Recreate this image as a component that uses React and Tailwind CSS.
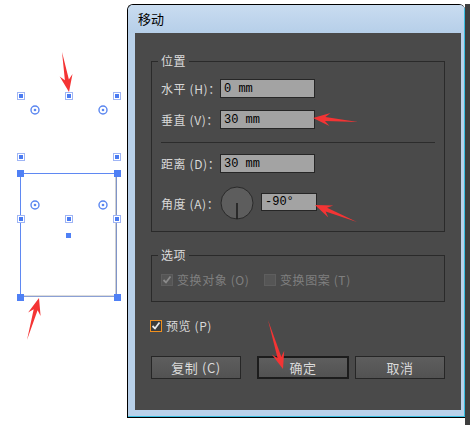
import React from 'react';

const cjk = { fontFamily: '"Noto Sans CJK SC", "Noto Sans", sans-serif' };
const mono = { fontFamily: '"Liberation Mono", "DejaVu Sans Mono", monospace' };

// tapered red pointer arrow, tail -> tip
function arrowPoints(x1, y1, x2, y2, hl = 17, hw = 13, sw = 4) {
    const dx = x2 - x1, dy = y2 - y1;
    const len = Math.hypot(dx, dy);
    const ux = dx / len, uy = dy / len;
    const nx = -uy, ny = ux;
    const bx = x2 - ux * hl, by = y2 - uy * hl;
    const jx = x2 - ux * hl * 0.72, jy = y2 - uy * hl * 0.72;
    const pts = [
        [x1, y1],
        [jx + nx * sw / 2, jy + ny * sw / 2],
        [bx + nx * hw / 2, by + ny * hw / 2],
        [x2, y2],
        [bx - nx * hw / 2, by - ny * hw / 2],
        [jx - nx * sw / 2, jy - ny * sw / 2],
    ];
    return pts.map(p => p.map(v => v.toFixed(1)).join(',')).join(' ');
}

function Handle({ x, y }) {
    return (
        <g>
            <rect x={x - 3.5} y={y - 3.5} width="7" height="7" fill="#fff" stroke="#9fb5f5" strokeWidth="1" />
            <rect x={x - 2} y={y - 2} width="4" height="4" fill="#4a7bf2" />
        </g>
    );
}

function Center({ x, y }) {
    return (
        <g>
            <circle cx={x} cy={y} r="4" fill="#fff" stroke="#5a86f0" strokeWidth="1.4" />
            <circle cx={x} cy={y} r="1.3" fill="#5a86f0" />
        </g>
    );
}

function Canvas() {
    const corners = [[20, 173], [117, 173], [20, 297], [117, 297]];
    return (
        <svg width="127" height="425" className="block shrink-0">
            <rect x="20.5" y="173.5" width="96" height="123" fill="none" stroke="#5f88f2" strokeWidth="1" />
            <line x1="116" y1="175" x2="116" y2="296" stroke="#a0a0a0" strokeWidth="1" />
            <line x1="22" y1="296" x2="115" y2="296" stroke="#b8b8b8" strokeWidth="1" />
            {[[21, 96], [69, 96], [117, 96], [21, 157], [117, 157], [21, 219], [69, 219], [117, 219]].map(([x, y], i) => (
                <Handle key={i} x={x} y={y} />
            ))}
            {[[35, 110], [103, 110], [35, 205], [103, 205]].map(([x, y], i) => (
                <Center key={i} x={x} y={y} />
            ))}
            {corners.map(([x, y], i) => (
                <rect key={i} x={x - 3} y={y - 3} width="7" height="7" fill="#4f80f5" />
            ))}
            <rect x="66" y="233" width="5" height="5" fill="#4f80f5" />
        </svg>
    );
}

function Field({ value, w = 'w-[95px]', h = 'h-[19px]' }) {
    return (
        <div className={`${w} ${h} bg-[#a3a3a3] border border-[#262626] flex items-center pl-[3px] text-[12px] text-black leading-none tracking-normal`} style={mono}>
            {value}
        </div>
    );
}

function Check({ checked, disabled }) {
    return (
        <div className={`w-[12px] h-[12px] flex items-center justify-center ${disabled ? 'bg-[#555] border border-[#5e5e5e]' : 'bg-[#3c3c3c] border border-[#f0901e]'}`}>
            {checked && (
                <svg width="10" height="10" viewBox="0 0 10 10">
                    <path d="M1.5 5 L4 7.5 L8.5 1.5" fill="none" stroke={disabled ? '#8a8a8a' : '#e8e8e8'} strokeWidth="1.8" />
                </svg>
            )}
        </div>
    );
}

function Group({ label, className, children }) {
    return (
        <div className={`relative border border-[#2a2a2a] ${className}`}>
            <span className="absolute -top-[9px] left-[6px] px-[3px] bg-[#4a4a4a] text-[12px] leading-[16px] text-[#dcdcdc]">
                {label}
            </span>
            {children}
        </div>
    );
}

function Label({ children, className = '' }) {
    return <span className={`w-[59px] shrink-0 whitespace-nowrap ${className}`}>{children}</span>;
}

function Dialog() {
    return (
        <div className="mt-[4px] w-[338px] h-[414px] shrink-0 flex flex-col border-l border-t border-b border-black rounded-t-[6px] bg-[#b9d1ea] overflow-hidden" style={cjk}>
            <div className="flex-1 flex flex-col border-r border-b border-[#38bde0]">
                {/* title bar */}
                <div className="h-[28px] flex items-center pl-[10px] text-[13px] text-black bg-gradient-to-b from-[#c9dcf0] to-[#b6cfe9]">
                    移动
                </div>
                <div className="flex pl-[7px]">
                    <div className="w-[326px] h-[377px] bg-[#4a4a4a] px-[16px] pt-[28px] flex flex-col text-[12px] tracking-[0.6px] text-[#d8d8d8] whitespace-nowrap">
                        <Group label="位置" className="h-[171px] pt-[17px] px-[9px]">
                            <div className="flex items-center h-[19px]">
                                <Label>水平 (H)：</Label>
                                <Field value="0 mm" />
                            </div>
                            <div className="flex items-center h-[19px] mt-[12px]">
                                <Label>垂直 (V)：</Label>
                                <Field value="30 mm" />
                            </div>
                            <div className="h-px bg-[#2c2c2c] mt-[13px]" />
                            <div className="flex items-center h-[19px] mt-[11px]">
                                <Label>距离 (D)：</Label>
                                <Field value="30 mm" />
                            </div>
                            <div className="flex items-start h-[33px] mt-[14px]">
                                <Label className="mt-[8px]">角度 (A)：</Label>
                                <svg width="34" height="34" className="block shrink-0 -mt-px">
                                    <circle cx="17" cy="17" r="16" fill="#5d5d5d" stroke="#2a2a2a" strokeWidth="1" />
                                    <line x1="17" y1="17" x2="17" y2="33" stroke="#1e1e1e" strokeWidth="1.6" />
                                </svg>
                                <div className="ml-[7px] mt-[6px]">
                                    <Field value="-90°" w="w-[56px]" h="h-[18px]" />
                                </div>
                            </div>
                        </Group>

                        <Group label="选项" className="h-[47px] mt-[23px] pt-[17px] px-[9px]">
                            <div className="flex items-center h-[13px] text-[#7f7f7f]">
                                <Check checked disabled />
                                <span className="ml-[4px] w-[87px]">变换对象 (O)</span>
                                <Check disabled />
                                <span className="ml-[4px]">变换图案 (T)</span>
                            </div>
                        </Group>

                        <div className="flex items-center mt-[17px] -ml-px h-[13px]">
                            <Check checked />
                            <span className="ml-[4px]">预览 (P)</span>
                        </div>

                        <div className="flex mt-[24px] h-[23px] text-[13px] text-[#dadada]">
                            <button className="w-[90px] h-full border border-[#262626] bg-gradient-to-b from-[#5e5e5e] to-[#525252]">复制 (C)</button>
                            <button className="w-[92px] h-full ml-[16px] border-2 border-[#1c1c1c] bg-gradient-to-b from-[#5e5e5e] to-[#525252]">确定</button>
                            <button className="w-[90px] h-full ml-[6px] border border-[#262626] bg-gradient-to-b from-[#5e5e5e] to-[#525252]">取消</button>
                        </div>
                    </div>
                </div>
            </div>
        </div>
    );
}

export default function App() {
    const arrows = [
        [62, 52, 69, 92],
        [27, 340, 39, 298],
        [358, 122, 313, 118],
        [357, 222, 315, 205],
        [268, 320, 283, 369],
    ];
    return (
        <div className="relative w-[470px] h-[425px] bg-white flex overflow-hidden">
            <Canvas />
            <Dialog />
            <div className="mt-[4px] flex-1 bg-[#3e3e3e]" />
            <svg width="470" height="425" className="absolute inset-0 pointer-events-none">
                {arrows.map((a, i) => (
                    <polygon key={i} points={arrowPoints(...a)} fill="#f43434" />
                ))}
            </svg>
        </div>
    );
}
